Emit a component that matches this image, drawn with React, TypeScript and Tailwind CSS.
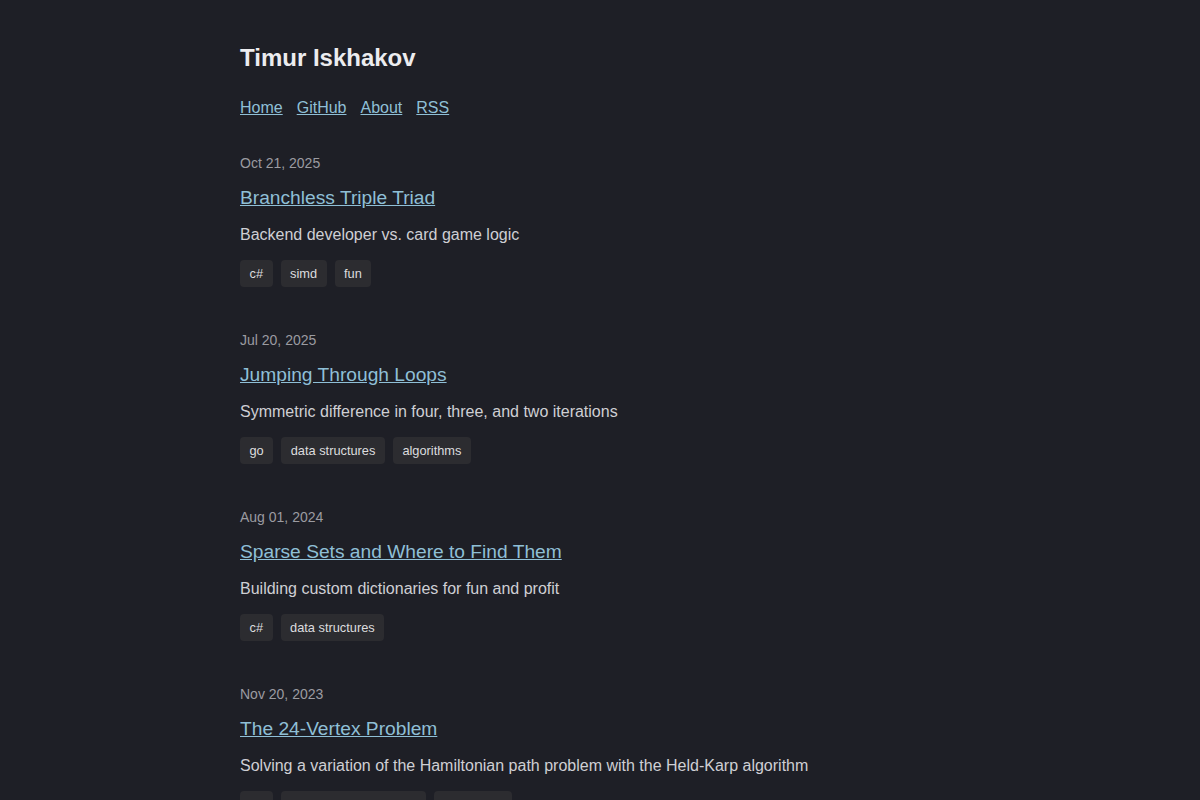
const posts = [
  {
    date: "Oct 21, 2025",
    title: "Branchless Triple Triad",
    summary: "Backend developer vs. card game logic",
    tags: ["c#", "simd", "fun"],
  },
  {
    date: "Jul 20, 2025",
    title: "Jumping Through Loops",
    summary: "Symmetric difference in four, three, and two iterations",
    tags: ["go", "data structures", "algorithms"],
  },
  {
    date: "Aug 01, 2024",
    title: "Sparse Sets and Where to Find Them",
    summary: "Building custom dictionaries for fun and profit",
    tags: ["c#", "data structures"],
  },
  {
    date: "Nov 20, 2023",
    title: "The 24-Vertex Problem",
    summary: "Solving a variation of the Hamiltonian path problem with the Held-Karp algorithm",
    tags: ["c#", "dynamic programming", "algorithms"],
  },
]

export default function App() {
  return (
    <div className="min-h-screen bg-[#1e1f26] font-['Liberation_Sans',Arial,sans-serif] text-[#d4d4d8]">
      <div className="mx-auto w-[720px] pt-[43px]">
        <h1 className="text-[24px] font-bold leading-[30px] text-[#ececef]">Timur Iskhakov</h1>
        <nav className="mt-[25px] flex gap-[14px] text-[16px] leading-[20px]">
          {["Home", "GitHub", "About", "RSS"].map((item) => (
            <a className="text-[#8fbfd6] underline" href="#" key={item}>
              {item}
            </a>
          ))}
        </nav>

        <div className="mt-[36px] flex flex-col gap-[44px]">
          {posts.map((post) => (
            <article key={post.title}>
              <p className="text-[14px] leading-[18px] text-[#9b9ba1]">{post.date}</p>
              <a className="mt-[14px] block text-[19.2px] leading-[24px] text-[#8fbfd6] underline" href="#">
                {post.title}
              </a>
              <p className="mt-[15px] text-[16px] leading-[20px] text-[#cfcfd4]">{post.summary}</p>
              <div className="mt-[15px] flex gap-[8px]">
                {post.tags.map((tag) => (
                  <span
                    className="rounded-[4px] bg-[#2c2c30] px-[9.5px] text-[12.8px] leading-[27px] text-[#dcdcdf]"
                    key={tag}
                  >
                    {tag}
                  </span>
                ))}
              </div>
            </article>
          ))}
        </div>
      </div>
    </div>
  )
}
